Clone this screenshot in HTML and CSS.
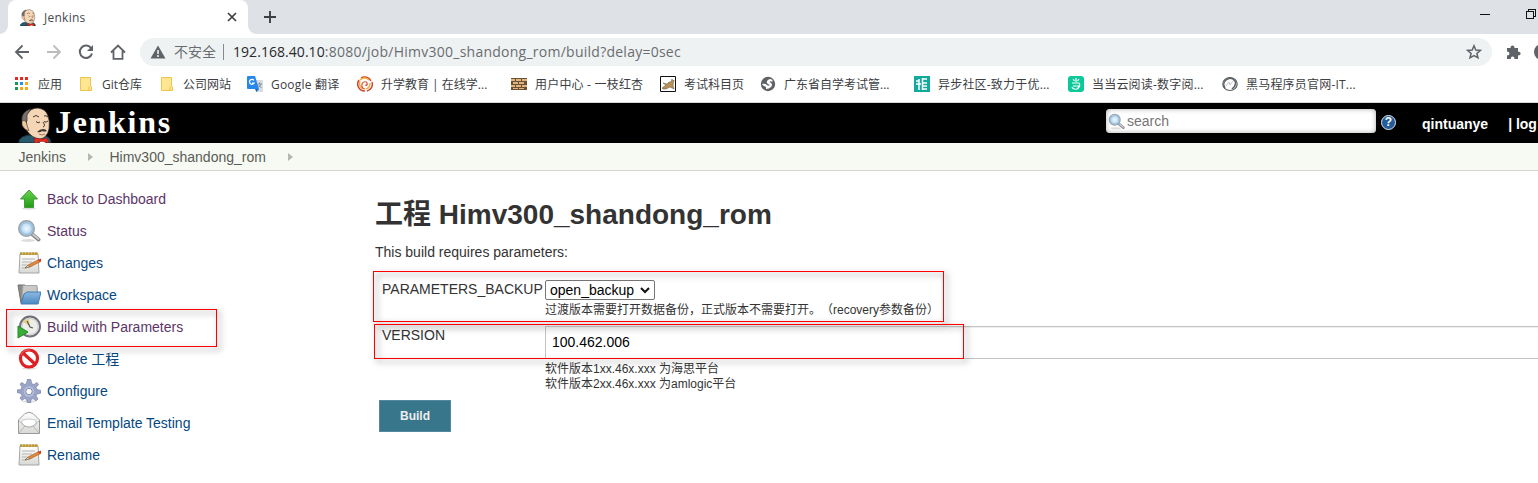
FILE: index.html
```html
<!DOCTYPE html>
<html lang="zh-CN">
<head>
<meta charset="utf-8">
<title>Jenkins</title>
<link rel="stylesheet" href="styles.css">
</head>
<body>
<svg class="defs" width="0" height="0">
  <defs>
    <linearGradient id="green" x1="0" y1="0" x2="0" y2="1"><stop offset="0" stop-color="#69d64c"/><stop offset="1" stop-color="#229a16"/></linearGradient>
    <linearGradient id="paper" x1="0" y1="0" x2="0" y2="1"><stop offset="0" stop-color="#fff"/><stop offset="1" stop-color="#d8d9d5"/></linearGradient>
    <linearGradient id="blue" x1="0" y1="0" x2="0" y2="1"><stop offset="0" stop-color="#8bb9e2"/><stop offset="1" stop-color="#4b89c4"/></linearGradient>
    <radialGradient id="lens"><stop offset="0" stop-color="#f0f8ff"/><stop offset="1" stop-color="#a3cbec"/></radialGradient>
    <symbol id="butler" viewBox="0 0 34 36">
      <path d="M1 36V33Q4 29 10 28L28 29Q33 31 33 36Z" fill="#27586b" stroke="#132b35"/>
      <path d="M8 8Q12 1 20 1Q28 2 30 9Q32 14 31 22Q29 31 22 32Q14 31 9 24Z" fill="#f5d6b7" stroke="#332b27" stroke-width=".7"/>
      <path d="M4 14C3 8 7 3 13 2L9 8L9 14L6 15Z" fill="#77716d" stroke="#34302d" stroke-width=".7"/>
      <path d="M4 14Q8 12 9 18L11 24Q6 23 4 18Z" fill="#edc6a3" stroke="#4b3529" stroke-width=".6"/>
      <path d="M15 10Q18 7 21 10M26 9Q28 8 30 10M18 14.500Q20 17 22 15M26 14.500Q28 16 30 14M25 15Q28 19 25 20" fill="none" stroke="#302620" stroke-width=".9"/>
      <path d="M19 25Q22 22 25 22Q28 22 29 24Q26 25 24 24Q22 26 19 25Z" fill="#40342e"/>
      <path d="M21 27Q24 29 27 27" fill="none" stroke="#8b5846" stroke-width=".8"/>
      <path d="M21 37L23 33H26L28 37Z" fill="#fff"/>
      <path d="M16 31L22 32H25L29 31L31 36L25 34.500H22L17 37Z" fill="#e52a20" stroke="#861713" stroke-width=".5"/>
    </symbol>
    <symbol id="magnifier" viewBox="0 0 24 24">
      <ellipse cx="11" cy="21.5" rx="7" ry="1.5" fill="#ddd"/>
      <path d="M15.500 15.500L21.500 20.500" stroke="#858585" stroke-width="3.800" stroke-linecap="round"/><path d="M16 15.500L21.500 20" stroke="#ccc" stroke-width="1.8" stroke-linecap="round"/>
      <circle cx="9.5" cy="9.5" r="7.7" fill="url(#lens)" stroke="#9aa3a9" stroke-width="1.6"/><circle cx="9.5" cy="9.5" r="5.8" fill="none" stroke="#8bb7da" stroke-width="1"/>
    </symbol>
    <symbol id="notepad" viewBox="0 0 24 24">
      <path d="M3 3H21L22 22H2Z" fill="url(#paper)" stroke="#a5a7a2"/>
      <path d="M3 1.5H21V4H3Z" fill="#d1b14b"/><path d="M4 1V4M7 1V4M10 1V4M13 1V4M16 1V4M19 1V4" stroke="#937a2b" stroke-width=".8"/>
      <path d="M5 8H18M5 11H15M5 14H10M5 17H9" stroke="#b5b7b3"/>
      <path d="M8 17L11 14L22 8.5L23.500 10.5L13 16Z" fill="#e68a3a" stroke="#98511d" stroke-width=".6"/><path d="M21 9L24 7.5L24 10.5L22.5 11Z" fill="#d43c25"/><path d="M8 17L11 14L12.5 16Z" fill="#efd5a2" stroke="#444" stroke-width=".4"/>
    </symbol>
  </defs>
</svg>

<div class="tabstrip">
  <div class="tab">
    <svg class="tab-icon" width="16" height="17"><use href="#butler"/></svg>
    <span class="tab-title">Jenkins</span>
    <svg width="10" height="10" viewBox="0 0 10 10" stroke="#3c4043" stroke-width="1.7"><path d="M1 1L9 9M9 1L1 9"/></svg>
  </div>
  <svg class="new-tab" width="12" height="12" viewBox="0 0 12 12" stroke="#3c4043" stroke-width="1.9"><path d="M0 6H12M6 0V12"/></svg>
  <svg class="window-controls" width="58" height="20" viewBox="0 0 58 20" fill="none" stroke="#111" shape-rendering="crispEdges"><path d="M0 9.500H10M46.500 6.500H53.500V13.500H46.500ZM48.500 6.500V4.500H55.500V11.500H53.500"/></svg>
</div>

<div class="toolbar">
  <svg width="16" height="16" viewBox="0 0 16 16" fill="none" stroke="#5f6368" stroke-width="1.8"><path d="M15 8H2M8.500 1.500L2 8L8.500 14.500"/></svg>
  <svg width="16" height="16" viewBox="0 0 16 16" fill="none" stroke="#babcbe" stroke-width="1.800"><path d="M1 8H14M7.500 1.500L14 8L7.500 14.500"/></svg>
  <svg width="16" height="16" viewBox="0 0 16 16" fill="none" stroke="#5f6368" stroke-width="2"><path d="M13.300 4.500A6.200 6.200 0 1 0 14 9.500"/><path d="M15 1V7H9Z" fill="#5f6368" stroke="none"/></svg>
  <svg width="16" height="16" viewBox="0 0 16 16" fill="none" stroke="#5f6368" stroke-width="1.800"><path d="M1 8.500L8 1.500L15 8.500M3.500 7V14.800H12.500V7"/></svg>
  <div class="omnibox">
    <svg width="16" height="14" viewBox="0 0 16 14"><path d="M8 .5L15.500 13.500H.5Z" fill="#5f6368"/><path d="M8 5V9M8 10V12" stroke="#eff2f3" stroke-width="1.600"/></svg>
    <span class="insecure">不安全</span>
    <span class="url"><b>192.168.40.10</b>:8080/job/Himv300_shandong_rom/build?delay=0sec</span>
    <svg width="16" height="16" viewBox="0 0 16 16" fill="none" stroke="#5f6368" stroke-width="1.500"><path d="M8 1.800L9.800 6L14.300 6.400L10.900 9.400L12 13.800L8 11.500L4 13.800L5.100 9.400L1.700 6.400L6.200 6Z"/></svg>
  </div>
  <svg class="extensions" width="15" height="15" viewBox="0 0 15 15" fill="#5f6368"><path d="M1 3H4.500C4.500 -.3 8.500 -.3 8.500 3H12V6.500C15.500 6.500 15.500 10.500 12 10.500V14H8.500C8.500 10.800 4.800 10.800 4.800 14H1V10.500C4.200 10.500 4.200 6.500 1 6.500Z"/></svg>
  <svg class="avatar" width="16" height="16"><circle cx="8" cy="8" r="8" fill="#5f6368"/></svg>
</div>

<nav class="bookmarks">
  <a><svg viewBox="0 0 16 16"><path d="M1 1h3v3h-3zM6 1h3v3h-3zM11 1h3v3h-3z" fill="#e8291c"/><path d="M1 6h3v3h-3zM1 11h3v3h-3z" fill="#139b55"/><path d="M6 6h3v3h-3z" fill="#218ff3"/><path d="M11 6h3v3h-3zM6 11h3v3h-3zM11 11h3v3h-3z" fill="#f9a816"/></svg><span>应用</span></a>
  <a><svg viewBox="0 0 16 16"><path d="M2.500 1.500H12.500V10L13.500 11V14.500H2.500Z" fill="#ffe693" stroke="#f0c34b"/><path d="M11 10.500V14" stroke="#f0c34b"/></svg><span>Git仓库</span></a>
  <a><svg viewBox="0 0 16 16"><path d="M2.500 1.500H12.500V10L13.500 11V14.500H2.500Z" fill="#ffe693" stroke="#f0c34b"/><path d="M11 10.500V14" stroke="#f0c34b"/></svg><span>公司网站</span></a>
  <a><svg viewBox="0 0 16 16"><path d="M6 4H16V16H9Z" fill="#dadce0"/><path d="M1 0H8L12 13H1Q0 13 0 12V1Q0 0 1 0Z" fill="#2588ed"/><path d="M8 13H12L9.500 16Z" fill="#1766c0"/><path d="M7 4.300A2.500 2.500 0 1 0 7.200 7H5" fill="none" stroke="#fff" stroke-width="1.200"/><path d="M10.500 8H15M12.500 6.500V8M14 8Q13 11 10.500 12M11.500 9L14.500 12" stroke="#7b929e" fill="none"/></svg><span class="wide">Google 翻译</span></a>
  <a><svg viewBox="0 0 16 16" fill="none"><path d="M4 2A7 7 0 0 1 14 5M15 6A7 7 0 0 1 10 15M8 15A7 7 0 0 1 2 4" stroke="#d4432d" stroke-width="1.500"/><path d="M3 4A6 6 0 0 1 12 4M13 7A6 6 0 0 1 9 13M6 13A6 6 0 0 1 3 5" stroke="#efb045" stroke-width="1.500"/><path d="M8 13Q4 12 5 8Q6 5 9.500 6Q11 8 9.500 9.500L8 9" stroke="#d6533d" stroke-width="1.200"/></svg><span>升学教育 | 在线学...</span></a>
  <a><svg viewBox="0 0 16 16"><path d="M0 2H16V14H0Z" fill="#6b5033"/><path d="M0 3h4v2h-4zM5 3h5v2h-5zM11 3h5v2h-5zM2 6h5v2h-5zM8 6h5v2h-5zM0 9h4v2h-4zM5 9h5v2h-5zM11 9h5v2h-5zM2 12h5v1h-5zM8 12h5v1h-5z" fill="#e0b47e"/></svg><span class="wide">用户中心 - 一枝红杏</span></a>
  <a><svg viewBox="0 0 16 16"><path d="M.5.500H15.500V15.500H.5Z" fill="#fff" stroke="#111"/><path d="M2 12L6 9L3 7L7 8L9 6L11 6L12 3L13 5L14 4L13 9L14 13L10 11L6 13L3 13Z" fill="#b89158" stroke="#5b5343" stroke-width=".5"/></svg><span>考试科目页</span></a>
  <a><svg viewBox="0 0 16 16"><circle cx="8" cy="8" r="7.200" fill="#5f6368"/><path d="M2 8Q5 7 7 9Q8 10 10 9L8 8Q6 7 7 5Q8 3 11 3L13 5Q11 6 10 5Q9 6 11 7Q13 8 11 11Q9 13 6 13V11Q3 10 2 8Z" fill="#fff"/></svg><span>广东省自学考试管...</span></a>
  <a><svg viewBox="0 0 16 16"><path d="M0 0H16V16H0Z" fill="#13a99c"/><path d="M2 8H7M5 3V14M2 5H5M8.500 2V14M9 3H13M9 7H13M9 10H13M9 13H13" fill="none" stroke="#fff" stroke-width="1.500"/></svg><span class="wide">异步社区-致力于优...</span></a>
  <a><svg viewBox="0 0 16 16"><rect width="16" height="16" rx="3" fill="#0cc99a"/><path d="M8 2V6M5 3L6.500 5M11 3L9.500 5M4 7H11Q13 10 9 13Q5 14 4 11M5 10H11" fill="none" stroke="#fff" stroke-width="1.200"/></svg><span class="wide">当当云阅读-数字阅...</span></a>
  <a><svg viewBox="0 0 16 16" fill="none" stroke="#5a6063"><ellipse cx="8" cy="8" rx="7.200" ry="6.500" stroke-width="1.200"/><path d="M3 12A6 6 0 0 1 4 4Q9 0 13 5Q15 9 10 13" stroke-width="1.500"/><path d="M4 10L7 6L8 9L11 5" stroke="#c1c5c7"/></svg><span class="wide">黑马程序员官网-IT...</span></a>
</nav>

<header class="header">
  <svg class="logo-face" width="34" height="36"><use href="#butler"/></svg>
  <span class="logo-name">Jenkins</span>
  <div class="search"><svg width="17" height="17"><use href="#magnifier"/></svg><span>search</span></div>
  <span class="help">?</span>
  <span class="user">qintuanye</span>
  <span class="logout">|&nbsp;log</span>
</header>

<div class="breadcrumbs">
  <span>Jenkins</span><i class="arrow"></i><span>Himv300_shandong_rom</span><i class="arrow"></i>
</div>

<main class="page">
  <aside class="tasks">
    <a class="task visited"><svg viewBox="0 0 24 24"><ellipse cx="12" cy="21.500" rx="7" ry="1.200" fill="#ddd"/><path d="M12 3L20.500 12H16.500V20.500H7.500V12H3.500Z" fill="url(#green)" stroke="#3f9c36"/></svg>Back to Dashboard</a>
    <a class="task visited"><svg><use href="#magnifier"/></svg>Status</a>
    <a class="task"><svg><use href="#notepad"/></svg>Changes</a>
    <a class="task"><svg viewBox="0 0 24 24"><path d="M1 2H8L9 4H20V20H4Z" fill="#8a8d8a" stroke="#6e716e"/><path d="M6 2.500H20V14H5Z" fill="#c9cac8" stroke="#a3a5a2"/><path d="M4 21L7 11L10 9H24L21 21Z" fill="url(#blue)" stroke="#447cb0"/></svg>Workspace</a>
    <a class="task visited marked"><svg viewBox="0 0 24 24"><circle cx="13" cy="11.500" r="10" fill="#eeeee9" stroke="#74727b" stroke-width="2"/><circle cx="13" cy="11.500" r="8" fill="none" stroke="#cdccd4"/><path d="M13 11L6 7Q8 4 12 4Z" fill="#e6d184"/><path d="M10 6L13 12L16 13" fill="none" stroke="#555" stroke-width="1.200"/><path d="M1 11L11 17L1 23Z" fill="#35ae35" stroke="#268b26"/></svg>Build with Parameters</a>
    <a class="task"><svg viewBox="0 0 24 24"><ellipse cx="12" cy="21.500" rx="7" ry="1.200" fill="#ddd"/><circle cx="12" cy="11.500" r="8.500" fill="#fff" stroke="#de2024" stroke-width="3.200"/><path d="M6 6L18 17" stroke="#de2024" stroke-width="3.200"/><path d="M4 8Q7 2 13 3" fill="none" stroke="#ef6a68"/></svg>Delete 工程</a>
    <a class="task"><svg viewBox="0 0 24 24"><ellipse cx="12" cy="22.500" rx="7" ry="1.200" fill="#ddd"/><path d="M10.500 0H13.500L15 5L17 5.500L20 3.500L21.500 5.500L19 8.500L20 10.500L24 11.500V14L20 15L19 17L21 20L19 22L16 19.500L14 20.500L13.500 24H10.500L9.500 20.500L7.500 19.500L5 21.500L3 19L5 16.500L4 14.500L0 13.500V11L4 10.500L5 8L3 5L5 3.500L7.500 5.500L9.500 4.500Z" fill="#9ba5c8" stroke="#7c84a8" stroke-width=".7"/><circle cx="12" cy="12.500" r="5.200" fill="#b7bfda"/><circle cx="12" cy="12.500" r="3.200" fill="#fff" stroke="#697599" stroke-width=".8"/></svg>Configure</a>
    <a class="task"><svg viewBox="0 0 24 24"><path d="M1.500 9L8 2.500Q12 0 16 2.500L22.500 9V22.500H1.500Z" fill="url(#paper)" stroke="#999b98"/><path d="M5 9Q12 7 19 9V14L12 17L5 14Z" fill="#fff" stroke="#ccc"/><path d="M2 22L8 15Q12 17 16 15L22 22M2 10L8 15M22 10L16 15" fill="none" stroke="#b5b7b4"/></svg>Email Template Testing</a>
    <a class="task"><svg><use href="#notepad"/></svg>Rename</a>
  </aside>

  <section class="content">
    <h1>工程 Himv300_shandong_rom</h1>
    <p class="intro">This build requires parameters:</p>
    <div class="param backup">
      <label>PARAMETERS_BACKUP</label>
      <div class="field">
        <div class="select">open_backup<svg width="10" height="7" viewBox="0 0 10 7" fill="none" stroke="#111" stroke-width="2"><path d="M1 1L5 5L9 1"/></svg></div>
        <div class="hint">过渡版本需要打开数据备份，正式版本不需要打开。（recovery参数备份）</div>
      </div>
    </div>
    <div class="param version">
      <label>VERSION</label>
      <div class="field">
        <div class="input">100.462.006</div>
        <div class="hint version-hint">软件版本1xx.46x.xxx 为海思平台<br>软件版本2xx.46x.xxx 为amlogic平台</div>
      </div>
    </div>
    <button class="build">Build</button>
  </section>
</main>
</body>
</html>
```
FILE: styles.css
```css
*, *::before, *::after { box-sizing: border-box; }
body {
  margin: 0;
  width: 1538px;
  height: 483px;
  overflow: hidden;
  background: #fff;
  color: #333;
  font: 14px/20px "Liberation Sans", "Noto Sans CJK SC", sans-serif;
}
svg { display: block; flex: none; }
.defs { position: absolute; }

/* Browser frame */
.tabstrip { display: flex; height: 34px; background: #dee1e6; }
.tab {
  position: relative;
  display: flex;
  align-items: center;
  width: 240px;
  margin-left: 8px;
  padding: 0 11px 0 12px;
  border-radius: 8px 8px 0 0;
  background: #fff;
}
.tab::before, .tab::after {
  content: "";
  position: absolute;
  bottom: 0;
  width: 8px;
  height: 8px;
}
.tab::before { left: -8px; background: radial-gradient(circle at 0 0, #dee1e6 7.5px, #fff 8px); }
.tab::after { right: -8px; background: radial-gradient(circle at 100% 0, #dee1e6 7.5px, #fff 8px); }
.tab-title {
  flex: 1;
  margin-left: 8px;
  padding-top: 2px;
  font: 12px/16px "Open Sans", sans-serif;
  letter-spacing: .25px;
  color: #45494d;
}
.new-tab { margin: 11px 0 0 16px; }
.window-controls { margin: 5px 0 0 auto; }

.toolbar { display: flex; align-items: center; height: 36px; padding-left: 14px; gap: 16px; }
.omnibox {
  display: flex;
  flex: none;
  align-items: center;
  width: 1352px;
  height: 28px;
  margin-left: -2px;
  padding: 0 10px;
  border-radius: 14px;
  background: #eff2f3;
  color: #696d71;
  font: 14px/20px "Open Sans", "Noto Sans CJK SC", sans-serif;
}
.insecure { margin-left: 8px; padding-right: 7px; border-right: 1px solid #85898c; line-height: 16px; }
.url { flex: 1; margin-left: 9px; letter-spacing: .25px; white-space: nowrap; }
.url b { color: #27292c; font-weight: 400; letter-spacing: .05px; }
.extensions { margin-left: -2px; }
.avatar { margin-left: -3px; }

.bookmarks {
  display: grid;
  grid-template-columns: 64px 81px 88px 110px 154px 149px 100px 154px 154px 154px 200px;
  height: 33px;
  padding: 0 0 4px 14px;
  border-bottom: 1px solid #d5d8da;
  color: #3c4043;
  font: 12px/16px "Open Sans", "Noto Sans CJK SC", sans-serif;
}
.bookmarks a { display: flex; align-items: center; gap: 8px; white-space: nowrap; }
.bookmarks svg { width: 16px; height: 16px; }
.bookmarks span { padding-top: 2px; }
.bookmarks .wide { letter-spacing: .2px; }

/* Application header */
.header { display: flex; height: 40px; padding-left: 18px; background: #000; color: #fff; font-weight: 700; }
.logo-face { margin-top: 4px; }
.logo-name { width: 120px; margin-left: 3px; font: 700 32px/38px "Liberation Serif", serif; letter-spacing: 1.7px; }
.search {
  display: flex;
  align-items: center;
  gap: 2px;
  width: 270px;
  height: 24px;
  margin: 6px 0 0 931px;
  padding-left: 2px;
  border-radius: 4px;
  background: #fff;
  box-shadow: inset 0 0 5px #aaa;
  color: #757575;
  font-weight: 400;
}
.help {
  width: 15px;
  height: 15px;
  margin: 12px 0 0 5px;
  border: 1px solid #d9e7f2;
  border-radius: 50%;
  background: #245b98;
  font-size: 12px;
  line-height: 13px;
  text-align: center;
}
.user { margin: 11px 0 0 26px; }
.logout { margin: 11px 0 0 20px; white-space: nowrap; }
.breadcrumbs {
  display: flex;
  align-items: center;
  height: 28px;
  padding-left: 18.5px;
  border-bottom: 1px solid #d3d7cf;
  background: #f6faf2;
  color: #5a5c59;
}
.arrow { margin: 0 16px 0 22.5px; border: 4px solid transparent; border-left: 5px solid #b5b8b1; border-right: 0; }

/* Sidebar */
.page { display: flex; }
.tasks { width: 375px; padding: 12px 0 0 17px; }
.task { position: relative; display: flex; align-items: center; gap: 6px; height: 32px; color: #06477f; }
.task svg { width: 24px; height: 24px; }
.visited { color: #5c3566; }
.marked::after, .param::after {
  content: "";
  position: absolute;
  border: 1px solid #f00;
  filter: drop-shadow(3px 3px 3px rgba(0, 0, 0, .6));
}
.marked::after { left: -11px; top: -2px; width: 211px; height: 38px; }

/* Build form */
.content { flex: 1; padding-top: 24px; }
h1 { margin: 0; font-size: 28px; line-height: 40px; white-space: nowrap; }
.intro { margin: 7px 0 0; line-height: 20px; }
.param { position: relative; display: flex; padding-left: 7px; }
.param label { width: 163px; }
.field { flex: 1; }
.backup { height: 46px; margin-top: 18px; }
.backup label { margin-top: -1px; }
.backup::after { left: -2px; top: -9px; width: 571px; height: 51px; }
.select {
  display: flex;
  align-items: center;
  justify-content: space-between;
  width: 110px;
  height: 20px;
  padding: 0 4px;
  border: 1px solid #767676;
  border-radius: 2px;
  color: #000;
}
.hint { margin-top: 3px; font-size: 12px; line-height: 15px; text-spacing-trim: space-all; white-space: nowrap; }
.version label { margin-top: -1px; }
.version::after { left: -1px; top: -2px; width: 590px; height: 35px; }
.input {
  height: 33px;
  padding: 0 6px;
  border: 1px solid #c3c3c3;
  border-right: 0;
  box-shadow: inset 0 1px 1px #eee;
  color: #000;
  line-height: 31px;
}
.build {
  display: block;
  width: 72px;
  height: 32px;
  margin: 8px 0 0 4px;
  padding: 0;
  border: 1px solid #5389a0;
  background: #38768b;
  color: #eee;
  font: 700 12px/28px "Liberation Sans", sans-serif;
}
```
